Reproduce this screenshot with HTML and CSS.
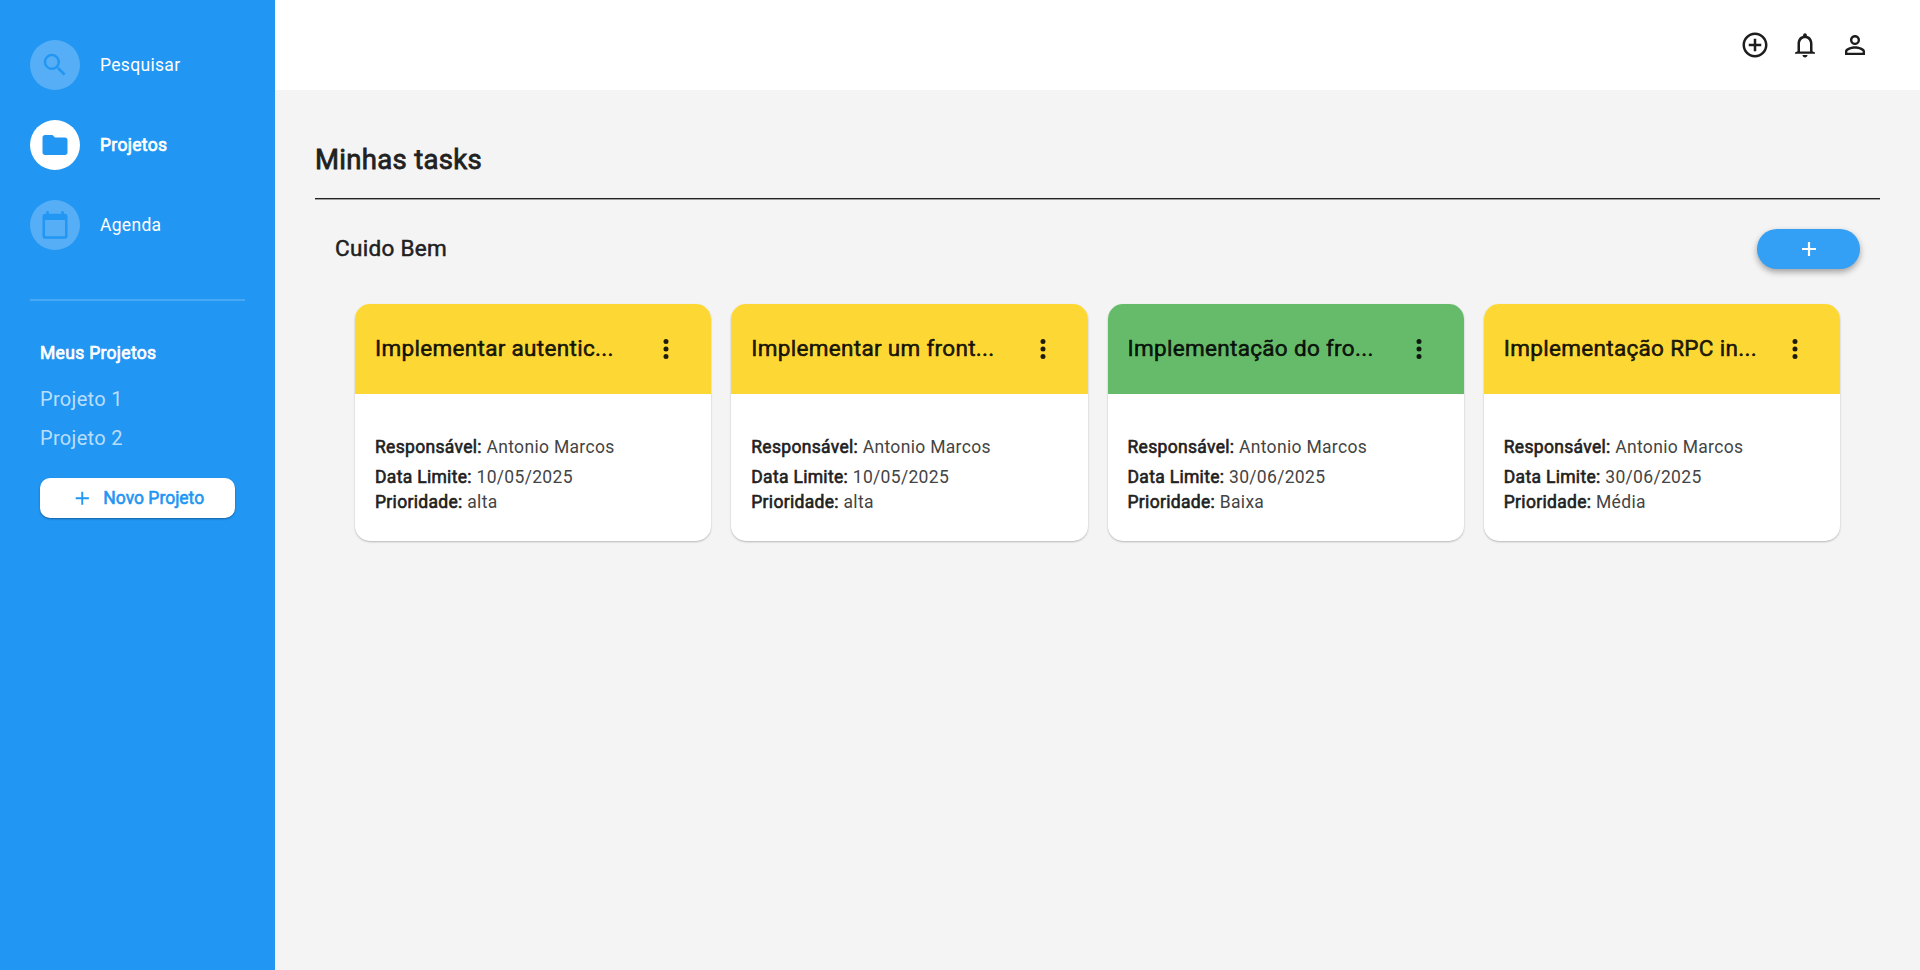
FILE: index.html
```html
<!DOCTYPE html>
<html lang="pt-BR">
<head>
<meta charset="utf-8">
<title>Minhas tasks</title>
<link rel="stylesheet" href="styles.css">
</head>
<body>
<div class="app">
  <aside class="sidebar">
    <nav class="nav">
      <a class="nav-item"><span class="nav-icon"><svg viewBox="0 0 24 24"><path d="M15.5 14h-.79l-.28-.27A6.47 6.47 0 0 0 16 9.5 6.5 6.5 0 1 0 9.5 16c1.61 0 3.09-.59 4.23-1.57l.27.28v.79l5 4.99L20.49 19l-4.99-5zm-6 0C7.01 14 5 11.99 5 9.5S7.01 5 9.5 5 14 7.01 14 9.5 11.99 14 9.5 14z"/></svg></span><span class="nav-label">Pesquisar</span></a>
      <a class="nav-item active"><span class="nav-icon"><svg viewBox="0 0 24 24"><path d="M10 4H4c-1.1 0-1.99.9-1.99 2L2 18c0 1.1.9 2 2 2h16c1.1 0 2-.9 2-2V8c0-1.1-.9-2-2-2h-8l-2-2z"/></svg></span><span class="nav-label">Projetos</span></a>
      <a class="nav-item"><span class="nav-icon"><svg viewBox="0 0 24 24"><path d="M20 3h-1V1h-2v2H7V1H5v2H4c-1.1 0-2 .9-2 2v16c0 1.1.9 2 2 2h16c1.1 0 2-.9 2-2V5c0-1.1-.9-2-2-2zm0 18H4V8h16v13z"/></svg></span><span class="nav-label">Agenda</span></a>
    </nav>
    <section class="projects">
      <h2 class="projects-title">Meus Projetos</h2>
      <a class="project">Projeto 1</a>
      <a class="project">Projeto 2</a>
      <button class="new-project"><svg viewBox="0 0 24 24"><path d="M19 13h-6v6h-2v-6H5v-2h6V5h2v6h6v2z"/></svg><span>Novo Projeto</span></button>
    </section>
  </aside>
  <div class="page">
    <header class="topbar">
      <svg viewBox="0 0 24 24"><path d="M13 7h-2v4H7v2h4v4h2v-4h4v-2h-4V7zm-1-5C6.48 2 2 6.48 2 12s4.48 10 10 10 10-4.48 10-10S17.52 2 12 2zm0 18c-4.41 0-8-3.59-8-8s3.59-8 8-8 8 3.59 8 8-3.59 8-8 8z"/></svg>
      <svg viewBox="0 0 24 24"><path d="M12 22c1.1 0 2-.9 2-2h-4c0 1.1.9 2 2 2zm6-5v-6c0-3.07-1.63-5.64-4.5-6.32V4c0-.83-.67-1.5-1.5-1.5s-1.5.67-1.5 1.5v.68C7.64 5.36 6 7.92 6 11v6l-2 1v1h16v-1l-2-1zm-2 .2H8V11c0-2.48 1.51-4.5 4-4.5s4 2.02 4 4.5v6.2z"/></svg>
      <svg viewBox="0 0 24 24"><path d="M12 5.9a2.1 2.1 0 1 1 0 4.2 2.1 2.1 0 0 1 0-4.2m0 9c2.97 0 6.1 1.46 6.1 2.1v1.1H5.9V17c0-.64 3.13-2.1 6.1-2.1M12 4C9.79 4 8 5.79 8 8s1.79 4 4 4 4-1.79 4-4-1.79-4-4-4zm0 9c-2.67 0-8 1.34-8 4v3h16v-3c0-2.66-5.33-4-8-4z"/></svg>
    </header>
    <main class="content">
      <h1 class="page-title">Minhas tasks</h1>
      <section class="board">
        <div class="board-head">
          <h2 class="board-title">Cuido Bem</h2>
          <button class="add-task" aria-label="Adicionar"><svg viewBox="0 0 24 24"><path d="M19 13.1h-5.9V19h-2.2v-5.9H5v-2.2h5.9V5h2.2v5.9H19z"/></svg></button>
        </div>
        <div class="cards">
          <article class="card">
            <div class="card-head yellow"><h3>Implementar autentic...</h3><svg viewBox="0 0 24 24"><path d="M12 8a2 2 0 1 0 0-4 2 2 0 0 0 0 4zm0 2a2 2 0 1 0 0 4 2 2 0 0 0 0-4zm0 6a2 2 0 1 0 0 4 2 2 0 0 0 0-4z"/></svg></div>
            <div class="card-body"><p class="owner"><b>Responsável:</b> Antonio Marcos</p><p><b>Data Limite:</b> 10/05/2025</p><p><b>Prioridade:</b> alta</p></div>
          </article>
          <article class="card">
            <div class="card-head yellow"><h3>Implementar um front...</h3><svg viewBox="0 0 24 24"><path d="M12 8a2 2 0 1 0 0-4 2 2 0 0 0 0 4zm0 2a2 2 0 1 0 0 4 2 2 0 0 0 0-4zm0 6a2 2 0 1 0 0 4 2 2 0 0 0 0-4z"/></svg></div>
            <div class="card-body"><p class="owner"><b>Responsável:</b> Antonio Marcos</p><p><b>Data Limite:</b> 10/05/2025</p><p><b>Prioridade:</b> alta</p></div>
          </article>
          <article class="card">
            <div class="card-head green"><h3>Implementação do fro...</h3><svg viewBox="0 0 24 24"><path d="M12 8a2 2 0 1 0 0-4 2 2 0 0 0 0 4zm0 2a2 2 0 1 0 0 4 2 2 0 0 0 0-4zm0 6a2 2 0 1 0 0 4 2 2 0 0 0 0-4z"/></svg></div>
            <div class="card-body"><p class="owner"><b>Responsável:</b> Antonio Marcos</p><p><b>Data Limite:</b> 30/06/2025</p><p><b>Prioridade:</b> Baixa</p></div>
          </article>
          <article class="card">
            <div class="card-head yellow"><h3>Implementação RPC in...</h3><svg viewBox="0 0 24 24"><path d="M12 8a2 2 0 1 0 0-4 2 2 0 0 0 0 4zm0 2a2 2 0 1 0 0 4 2 2 0 0 0 0-4zm0 6a2 2 0 1 0 0 4 2 2 0 0 0 0-4z"/></svg></div>
            <div class="card-body"><p class="owner"><b>Responsável:</b> Antonio Marcos</p><p><b>Data Limite:</b> 30/06/2025</p><p><b>Prioridade:</b> Média</p></div>
          </article>
        </div>
      </section>
    </main>
  </div>
</div>
</body>
</html>
```

FILE: styles.css
```css
* { box-sizing: border-box; margin: 0; padding: 0; }

body {
  font-family: Roboto, "Liberation Sans", sans-serif;
  font-size: 17.5px;
  letter-spacing: 0.3125px;
  color: #212121;
  background: #f4f4f4;
}

svg { display: block; fill: currentColor; flex: none; width: 30px; height: 30px; }
button { font: inherit; border: 0; }

.app { display: flex; height: 970px; }

/* Sidebar */
.sidebar { width: 275px; flex: none; background: #2196f3; color: #fff; }
.nav {
  display: flex;
  flex-direction: column;
  gap: 30px;
  margin: 0 30px;
  padding: 40px 0 49px;
  border-bottom: 2px solid rgba(255, 255, 255, 0.18);
}
.nav-item { display: flex; align-items: center; gap: 20px; height: 50px; }
.nav-icon {
  display: grid;
  place-items: center;
  width: 50px;
  height: 50px;
  border-radius: 50%;
  background: rgba(255, 255, 255, 0.24);
  color: #2196f3;
}
.nav-label { line-height: 25px; }
.active .nav-icon { background: #fff; }
.active .nav-label { -webkit-text-stroke: 0.7px; }

.projects { display: flex; flex-direction: column; padding: 40px 40px 0; }
.projects-title { font-size: 17.5px; font-weight: 400; line-height: 25px; -webkit-text-stroke: 0.7px; margin-bottom: 19px; }
.project { font-size: 20px; line-height: 29px; margin-bottom: 10px; color: rgba(255, 255, 255, 0.7); }
.new-project {
  display: flex;
  align-items: center;
  justify-content: center;
  gap: 10px;
  height: 40px;
  margin-top: 15px;
  border-radius: 10px;
  background: #fff;
  color: #2196f3;
  letter-spacing: 0;
  -webkit-text-stroke: 0.6px;
  box-shadow: 0 1px 2px rgba(0, 0, 0, 0.35);
}
.new-project svg { width: 22.5px; height: 22.5px; }

/* Main area */
.page { flex: 1; display: flex; flex-direction: column; }
.topbar {
  display: flex;
  align-items: center;
  justify-content: flex-end;
  gap: 20px;
  height: 90px;
  padding-right: 50px;
  background: #fff;
  color: #1d1d1d;
}
.content { padding: 40px 40px 0; }
.page-title {
  height: 68px;
  padding-top: 10px;
  font-size: 27.5px;
  font-weight: 400;
  line-height: 40px;
  -webkit-text-stroke: 0.8px;
}
/* Rule under the title: a solid pixel with a softer one below it */
.board {
  padding: 28px 20px 0;
  border-top: 1px solid #212121;
  box-shadow: inset 0 1px #a0a0a0;
}
.board-head { display: flex; align-items: center; justify-content: space-between; height: 43px; }
.board-title { font-size: 22.5px; font-weight: 400; line-height: 32px; padding-bottom: 2px; -webkit-text-stroke: 0.5px; }
.add-task {
  display: grid;
  place-items: center;
  width: 103px;
  height: 40px;
  border-radius: 20px;
  background: #339ff5;
  color: #fff;
  box-shadow: 0 3px 6px rgba(0, 0, 0, 0.35);
}
.add-task svg { width: 24px; height: 24px; }

/* Task cards */
.cards { display: grid; grid-template-columns: repeat(4, 1fr); gap: 20px; padding: 34px 20px 0; }
.card { height: 237px; overflow: hidden; border-radius: 15px; background: #fff; box-shadow: 0 1px 2px rgba(0, 0, 0, 0.25); }
.card-head {
  display: flex;
  align-items: center;
  justify-content: space-between;
  height: 90px;
  padding: 0 30px 0 20px;
  color: rgba(0, 0, 0, 0.87);
}
.card-head h3 { font-size: 22.5px; font-weight: 400; line-height: 32px; padding-bottom: 2px; -webkit-text-stroke: 0.6px; }
.yellow { background: #fdd835; }
.green { background: #66bb6a; }
.card-body { padding: 41px 20px 0; color: #444; }
.card-body p { line-height: 25px; }
.card-body b { font-weight: 400; color: #212121; -webkit-text-stroke: 0.6px; }
.card-body .owner { margin-bottom: 5px; }
```
